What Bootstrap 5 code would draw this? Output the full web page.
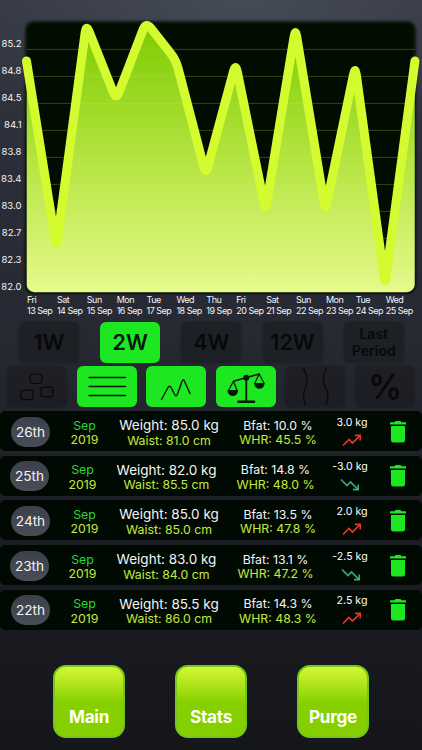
<!DOCTYPE html>
<html lang="en">
<head>
  <meta charset="UTF-8">
  <meta name="viewport" content="width=device-width, initial-scale=1.0">
  <title>Body Stats</title>
  <link rel="stylesheet" href="https://cdn.jsdelivr.net/npm/bootstrap@5.3.0/dist/css/bootstrap.min.css">
  <style>
    body {
      height: 750px;
      overflow: hidden;
      font-family: Inter, "Liberation Sans", sans-serif;
      color: #f4f5f6;
      background:
        radial-gradient(ellipse 330px 150px at 58% 0, rgba(85, 92, 106, .55), rgba(85, 92, 106, 0)),
        linear-gradient(#32363f 0, #2a2d37 200px, #262932 340px, #1f2027 480px, #191a1f 640px, #151619 750px);
    }
    .chart-area { height: 318px; }
    .y-axis { width: 22px; padding-top: 30px; padding-right: .5px; font-size: 9.5px; line-height: 27px; }
    .plot { height: 295px; display: block; }
    .x-axis { padding: 0 7px 0 27px; margin-top: -6.5px; font-size: 9px; line-height: 11px; letter-spacing: -.5px; }
    .x-axis > div { width: 29.9px; flex: none; white-space: nowrap; }

    .tile {
      width: 60px;
      height: 41px;
      padding: 1px 0 0;
      border: 0;
      border-radius: 6px;
      color: #08090b;
      background: rgba(25, 26, 30, .6);
      box-shadow: 0 0 2px rgba(25, 26, 30, .55);
      font-size: 21.5px;
      font-weight: 600;
      line-height: 1;
    }
    .tile.on { background: #1de720; color: #06180a; box-shadow: none; }
    .tile svg { display: block; margin-top: -1px; }
    .periods { gap: 21.2px; padding: 3.5px 0 0 19px; }
    .toggles { gap: 9.6px; padding: 3.5px 0 0 7px; }
    .tile-text { padding: 0; font-size: 14px; line-height: 17.5px; }
    .tile-percent { font-size: 34px; }

    .entries { padding-top: 4px; gap: 4.7px; }
    .entry {
      display: grid;
      grid-template-columns: 61px 47px 122px 96px 52px 40px;
      height: 40px;
      border-radius: 5px;
      background: #010a02;
      white-space: nowrap;
      text-align: center;
      align-items: center;
      justify-items: center;
    }
    .entry.loss { grid-template-columns: 59px 47px 121px 97px 52px 44px; }
    .day {
      width: 39px;
      height: 30px;
      margin-top: 1px;
      border-radius: 15px;
      background: linear-gradient(#3c404b, #494d58);
      font-size: 13.6px;
      line-height: 31px;
    }
    .reading { padding-top: 4px; }
    .line-a, .line-b { line-height: 14.4px; font-size: 12.3px; }
    .line-b { color: #c3ea3e; }
    .month { color: #2bd836; }
    .weight { font-size: 13.5px; line-height: 15.6px; }
    .delta { font-size: 10.6px; line-height: 13px; padding-bottom: 5px; }
    .up { color: #ee3525; }
    .down { color: #3bad70; }
    .trash { margin-top: 1px; }

    .actions { padding: 35.5px 0 0 53px; gap: 50px; }
    .action {
      width: 72px;
      height: 72.5px;
      padding: 0 0 8px;
      border: 2px solid #75c61d;
      border-radius: 13px;
      background: linear-gradient(#d3f735 0, #c4ee28 12%, #86d000 52%, #85cf00 100%);
      color: #fdfff5;
      font-size: 17.2px;
      font-weight: 700;
      letter-spacing: -.3px;
      line-height: 22px;
    }
  </style>
</head>
<body>
  <section class="chart-area">
    <div class="d-flex">
      <div class="y-axis text-end" id="y-axis"></div>
      <svg class="plot" width="400" height="295" viewBox="22 0 400 295">
        <defs>
          <linearGradient id="area" gradientUnits="userSpaceOnUse" x1="0" y1="22" x2="0" y2="292">
            <stop offset="0" stop-color="#7cca00"/>
            <stop offset=".5" stop-color="#b3e43f"/>
            <stop offset="1" stop-color="#e6fa8c"/>
          </linearGradient>
          <filter id="soft" x="-5%" y="-5%" width="110%" height="110%"><feGaussianBlur stdDeviation="1.8"/></filter>
          <clipPath id="frame"><rect x="26.4" y="0" width="388.4" height="292.2" rx="8"/></clipPath>
        </defs>
        <rect x="25.5" y="21.5" width="390" height="272" rx="8" fill="#010a02" filter="url(#soft)"/>
        <path id="fill" fill="url(#area)" clip-path="url(#frame)"/>
        <g id="grid" stroke="#c8f050" stroke-opacity=".25"></g>
        <path id="line" fill="none" stroke="#d3fb30" stroke-width="9" stroke-linecap="round" stroke-linejoin="round"/>
      </svg>
    </div>
    <div class="x-axis d-flex" id="x-axis"></div>
  </section>

  <div class="d-flex periods">
    <button class="tile">1W</button>
    <button class="tile on">2W</button>
    <button class="tile">4W</button>
    <button class="tile">12W</button>
    <button class="tile tile-text">Last<br>Period</button>
  </div>

  <div class="d-flex toggles">
    <button class="tile">
      <svg width="60" height="41" fill="none" stroke="#08090b" stroke-width="1.2">
        <rect x="23" y="8" width="12" height="9.5" rx="2.5"/>
        <rect x="14" y="24.2" width="12" height="9.5" rx="2.5"/>
        <rect x="34" y="21.2" width="12" height="9.5" rx="2.5"/>
      </svg>
    </button>
    <button class="tile on">
      <svg width="60" height="41" stroke="#06180a" stroke-width="1.4" stroke-linecap="round">
        <path d="M12 11.5H48.5M12 20.5H48.5M12 29.5H48.5"/>
      </svg>
    </button>
    <button class="tile on">
      <svg width="60" height="41" fill="none" stroke="#06180a" stroke-width="1.4" stroke-linecap="round">
        <path d="M15.5 33.5 22 21.5Q23.5 19 25 21.5L29 29Q30.2 31 31.3 28.5L36 15.5Q37.3 12 38.6 15.5L44 27.5"/>
      </svg>
    </button>
    <button class="tile on">
      <svg width="60" height="41" fill="none" stroke="#06180a" stroke-width="1.2" stroke-linecap="round">
        <path d="M17.5 15.3 43.2 8" stroke-width="1.6"/>
        <path d="M30.3 11.5V35" stroke-width="1.8"/>
        <path d="M22.5 35.7H38" stroke-width="2.6"/>
        <circle cx="30.3" cy="11.7" r="2.3" fill="#06180a"/>
        <path d="M17.5 15.3 12.3 24.7M17.5 15.3 21.2 24.7M43.2 8 38.8 17.3M43.2 8 48 17.3"/>
        <path d="M12.2 24.7H21.4A4.6 4.6 0 0 1 12.2 24.7ZM38.8 17.5H48A4.6 4.6 0 0 1 38.8 17.5Z" fill="#06180a"/>
      </svg>
    </button>
    <button class="tile">
      <svg width="60" height="41" fill="none" stroke="#08090b" stroke-width="1.3">
        <path d="M18.5 2C20.5 8 23.5 12 21.5 19S16.5 28 20.5 39M41.5 2C39 8 37 12 39.5 19S45 28 41 39"/>
      </svg>
    </button>
    <button class="tile tile-percent">%</button>
  </div>

  <div class="entries d-flex flex-column" id="entries"></div>

  <div class="actions d-flex">
    <button class="action d-flex align-items-end justify-content-center">Main</button>
    <button class="action d-flex align-items-end justify-content-center">Stats</button>
    <button class="action d-flex align-items-end justify-content-center">Purge</button>
  </div>

  <script src="https://cdn.jsdelivr.net/npm/bootstrap@5.3.0/dist/js/bootstrap.bundle.min.js"></script>
  <script>
    // Axis labels
    const levels = ['85.2', '84.8', '84.5', '84.1', '83.8', '83.4', '83.0', '82.7', '82.3', '82.0'];
    document.getElementById('y-axis').innerHTML = levels.map(v => `<div>${v}</div>`).join('');

    const days = ['Fri', 'Sat', 'Sun', 'Mon', 'Tue', 'Wed', 'Thu'];
    let labels = '';
    for (let i = 0; i < 13; i++) {
      labels += `<div>${days[i % 7]}<br>${13 + i} Sep</div>`;
    }
    document.getElementById('x-axis').innerHTML = labels;

    // Grid lines
    let grid = '';
    for (let i = 0; i < 9; i++) {
      grid += `<path d="M26.5 ${49.4 + i * 27}H414.8"/>`;
    }
    document.getElementById('grid').innerHTML = grid;

    // Weight line with slightly rounded corners
    const ys = [61, 247.5, 24.5, 99.5, 22, 60, 174.5, 63.5, 210.5, 28.5, 210.5, 66.5, 284.5, 61];
    const pts = ys.map((y, i) => [26.5 + i * 29.88, y]);
    const toward = (a, b, dist) => {
      const len = Math.hypot(b[0] - a[0], b[1] - a[1]);
      return [a[0] + (b[0] - a[0]) * dist / len, a[1] + (b[1] - a[1]) * dist / len];
    };
    let d = `M${pts[0]}`;
    for (let i = 1; i < pts.length - 1; i++) {
      d += `L${toward(pts[i], pts[i - 1], 8)}Q${pts[i]} ${toward(pts[i], pts[i + 1], 8)}`;
    }
    d += `L${pts[13]}`;
    document.getElementById('line').setAttribute('d', d);
    document.getElementById('fill').setAttribute('d', `${d}V293H26.5Z`);

    // Measurements
    const entries = [
      { day: '26th', weight: '85.0', waist: '81.0', fat: '10.0', whr: '45.5', delta: '3.0' },
      { day: '25th', weight: '82.0', waist: '85.5', fat: '14.8', whr: '48.0', delta: '-3.0' },
      { day: '24th', weight: '85.0', waist: '85.0', fat: '13.5', whr: '47.8', delta: '2.0' },
      { day: '23th', weight: '83.0', waist: '84.0', fat: '13.1', whr: '47.2', delta: '-2.5' },
      { day: '22th', weight: '85.5', waist: '86.0', fat: '14.3', whr: '48.3', delta: '2.5' }
    ];
    const arrows = {
      up: 'M1 11.5 7 5.5 10.5 9 17.5 2M13 1.3H18.3V6.6',
      down: 'M1 1.5 7 7.5 10.5 4 17.5 11M13 11.7H18.3V6.4'
    };
    document.getElementById('entries').innerHTML = entries.map(e => {
      const dir = e.delta.startsWith('-') ? 'down' : 'up';
      return `
        <div class="entry ${dir === 'down' ? 'loss' : ''}">
          <div class="day">${e.day}</div>
          <div class="reading"><div class="line-a month">Sep</div><div class="line-b">2019</div></div>
          <div class="reading"><div class="weight">Weight: ${e.weight} kg</div><div class="line-b">Waist: ${e.waist} cm</div></div>
          <div class="reading"><div class="line-a">Bfat: ${e.fat} %</div><div class="line-b">WHR: ${e.whr} %</div></div>
          <div class="${dir}">
            <div class="delta text-white">${e.delta} kg</div>
            <svg class="d-block mx-auto" width="19" height="13" fill="none" stroke="currentColor" stroke-width="1.7"><path d="${arrows[dir]}"/></svg>
          </div>
          <svg class="trash" width="16" height="22" fill="#1de720"><path d="M0 1.3H4.5L5.5 0H10.5L11.5 1.3H16V3.5H0ZM1 5H15V19Q15 21.5 12.5 21.5H3.5Q1 21.5 1 19Z"/></svg>
        </div>`;
    }).join('');
  </script>
</body>
</html>
